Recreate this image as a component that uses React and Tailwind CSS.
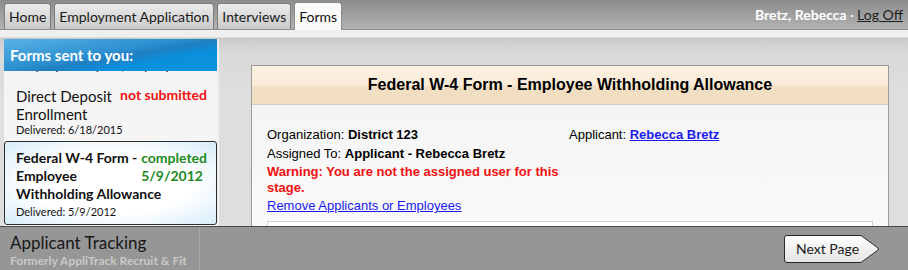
import React from 'react';

const tabs = [
  { label: 'Home' },
  { label: 'Employment Application' },
  { label: 'Interviews' },
  { label: 'Forms', active: true },
];

function Tab({ label, active }) {
  if (active) {
    return (
      <div className="h-[28px] px-[4px] flex items-center rounded-t-[3px] border border-b-0 border-[#8a8a8a] bg-[#fafafa] text-[#111] text-[14px] -mb-px relative z-10">
        {label}
      </div>
    );
  }
  return (
    <div className="h-[26px] px-[4px] flex items-center rounded-t-[3px] border border-b-0 border-[#7d7d7d] bg-gradient-to-b from-[#ececec] to-[#c9c9c9] text-[#1a1a1a] text-[14px]">
      {label}
    </div>
  );
}

function NextPageButton() {
  return (
    <div className="relative w-[98px] h-[30px]">
      <svg width="98" height="30" viewBox="0 0 98 30" className="absolute inset-0">
        <defs>
          <linearGradient id="np" x1="0" y1="0" x2="0" y2="1">
            <stop offset="0" stopColor="#ffffff" />
            <stop offset="1" stopColor="#e4e4e4" />
          </linearGradient>
        </defs>
        <path
          d="M4 1.5 H78 L95 14 Q96 15 95 16 L78 28.5 H4 Q1.5 28.5 1.5 26 V4 Q1.5 1.5 4 1.5 Z"
          fill="url(#np)"
          stroke="#2a2a2a"
          strokeWidth="1"
        />
      </svg>
      <span className="absolute left-[13px] top-[6px] text-[14px] text-[#1a1a1a] leading-[18px]">Next Page</span>
    </div>
  );
}

export default function App() {
  return (
    <div className="w-[908px] h-[270px] overflow-hidden flex flex-col font-['Lato','Open_Sans',sans-serif] bg-[#dcdcdc]">
      {/* top nav */}
      <div className="h-[30px] shrink-0 flex items-end justify-between bg-gradient-to-b from-[#8c8c8c] to-[#b2b2b2] border-b border-[#8a9098] pl-[4px] pr-[5px]">
        <div className="flex items-end gap-[3px]">
          {tabs.map((t) => (
            <Tab key={t.label} {...t} />
          ))}
        </div>
        <div className="self-center text-[14px] font-bold text-white">
          Bretz, Rebecca <span className="font-normal">·</span>{' '}
          <span className="underline font-normal text-[#1c1c1c]">Log Off</span>
        </div>
      </div>

      {/* content */}
      <div className="flex-1 min-h-0 overflow-hidden relative bg-[linear-gradient(#efefef_0px,#efefef_7px,#c9c9c9_8px,#d9d9d9_22px,#dedede_60px)] flex">
        {/* sidebar */}
        <div className="w-[214px] ml-[4px] mt-[9px] shrink-0 flex flex-col bg-[#f5f5f5] border-r border-[#ececec] shadow-[1px_0_0_#f2f2f2]">
          <div className="h-[32px] shrink-0 flex items-center px-[6px] bg-[linear-gradient(170deg,#58b2e6_0%,#2c8fd0_45%,#1f7fc2_55%,#0a8fdc_70%,#0b92df_100%)] text-white font-bold text-[15px]">
            Forms sent to you:
          </div>
          <div className="flex-1 overflow-hidden">
            <div className="h-[3px] overflow-hidden">
              <div className="px-[12px] -mt-[15px] text-[14px] leading-[18px] text-[#222]">Employee Payroll, Payday</div>
            </div>
            <div className="px-[12px] pt-[13px] pb-[4px] pr-[10px] text-[#111]">
              <div className="float-right text-[#ee1111] font-bold text-[14px] leading-[18px] -mt-[1px]">
                not submitted
              </div>
              <div className="text-[15px] leading-[18px]">Direct Deposit Enrollment</div>
              <div className="text-[11px] leading-[14px]">Delivered: 6/18/2015</div>
            </div>
            <div className="rounded-[3px] border border-[#2d2d2d] bg-[radial-gradient(ellipse_at_center,#ffffff_55%,#d6ecf9_100%)] pl-[11px] pr-[9px] pt-[7px] pb-[5px] text-[#111]">
              <div className="float-right text-left text-[#238a23] font-bold text-[14px] leading-[18px]">
                completed
                <br />
                5/9/2012
              </div>
              <div className="font-bold text-[14px] leading-[18px]">Federal W-4 Form - Employee Withholding Allowance</div>
              <div className="text-[11px] leading-[14px] mt-[2px]">Delivered: 5/9/2012</div>
            </div>
          </div>
        </div>

        {/* main panel */}
        <div className="ml-[33px] mt-[35px] w-[638px] shrink-0 border border-[#9a9a9a] bg-[linear-gradient(#f3f3f3,#fbfbfb)] font-['Liberation_Sans',Arial,sans-serif] self-start">
          <div className="h-[39px] flex items-center justify-center border-b border-[#cfcfcf] bg-[linear-gradient(#fdf1e1_0%,#f9ebd7_50%,#f2dfc3_55%,#f1ddc0_100%)] text-[16px] font-bold text-black">
            Federal W-4 Form - Employee Withholding Allowance
          </div>
          <div className="px-[15px] pt-[20px] text-[13px] leading-[19px] text-black">
            <div className="flex">
              <div className="w-[302px]">
                <div>
                  Organization: <b>District 123</b>
                </div>
                <div>
                  Assigned To: <b>Applicant - Rebecca Bretz</b>
                </div>
                <div className="text-[#f01010] font-bold leading-[16px] mt-[1px]">
                  Warning: You are not the assigned user for this stage.
                </div>
                <div className="leading-[17px] mt-[1px]">
                  <span className="text-[#1a1aee] underline">Remove Applicants or Employees</span>
                </div>
              </div>
              <div>
                Applicant: <span className="text-[#1a1aee] underline font-bold">Rebecca Bretz</span>
              </div>
            </div>
            <div className="mt-[7px] h-[40px] border border-[#cfcfcf] bg-white" />
          </div>
        </div>
      </div>

      {/* footer */}
      <div className="h-[44px] shrink-0 flex items-stretch bg-[#969696] border-t border-[#4a4a4a]">
        <div className="w-[200px] border-r border-[#a6a6a6] pl-[10px] pt-[6px]">
          <div className="text-[17px] leading-[20px] text-[#161616]">Applicant Tracking</div>
          <div className="whitespace-nowrap text-[12px] leading-[15px] font-bold text-[#c9c9c9]">Formerly AppliTrack Recruit &amp; Fit</div>
        </div>
        <div className="flex-1 flex items-center justify-end pr-[27px] pt-[1px]">
          <NextPageButton />
        </div>
      </div>
    </div>
  );
}
